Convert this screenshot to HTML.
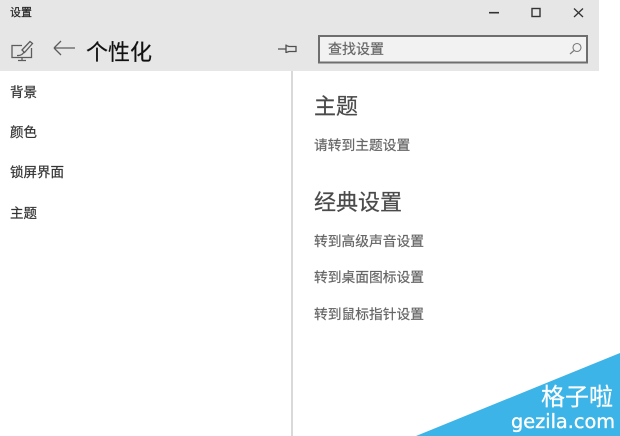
<!DOCTYPE html>
<html>
<head>
<meta charset="utf-8">
<style>
html,body{margin:0;padding:0;}
body{width:620px;height:436px;position:relative;overflow:hidden;background:#fff;font-family:"Liberation Sans","Noto Sans CJK SC",sans-serif;}
.t{position:absolute;white-space:nowrap;line-height:1;-webkit-text-stroke:0.2px currentColor;}
.a{position:absolute;}
</style>
</head>
<body>
<div class="a" style="left:0;top:0;width:599px;height:71px;background:#e6e6e6;"></div>
<div class="a" style="left:291px;top:71px;width:2px;height:365px;background:#d9d9d9;"></div>
<div class="t" style="left:10px;top:8px;font-size:11px;color:#222;">设置</div>

<svg class="a" style="left:0;top:0;" width="620" height="71" fill="none">
<g stroke="#5c5c5c" stroke-width="1.3">
<path d="M22 45.500H12V57.500H31.500V48"/>
<path d="M18 60.500H26M22 57.500V60.500"/>
<path d="M22 50L30 41.500L32.500 43.500L24.500 52.500Z"/>
<path d="M17 55.500Q22 56 24 52"/>
</g>
<path d="M54 48H75M54 48L61 41M54 48L61 55" stroke="#5c5c5c" stroke-width="1.3"/>
<path d="M489 12.700H499" stroke="#333" stroke-width="1.600"/>
<rect x="532" y="8.500" width="8" height="8" stroke="#333" stroke-width="1.400"/>
<path d="M574 8.500L583 17M583 8.500L574 17" stroke="#333" stroke-width="1.300"/>
<path d="M278 49H286M286 44.500V53M286 45.500L289 46.500H296V51.500H289L286 52.500" stroke="#4f4f4f" stroke-width="1.300"/>
<rect x="319" y="36" width="268" height="26.500" fill="#f2f2f2" stroke="#6e6e6e" stroke-width="2"/>
<circle cx="577" cy="47.500" r="4" stroke="#7a7a7a" stroke-width="1.100"/>
<path d="M574 50.500L570 54" stroke="#7a7a7a" stroke-width="1.200"/>
</svg>

<div class="t" style="left:86px;top:42px;font-size:22px;color:#111;">个性化</div>
<div class="t" style="left:328px;top:42px;font-size:14px;color:#666;">查找设置</div>

<div class="t" style="left:10px;top:85.500px;font-size:13.500px;color:#333;">背景</div>
<div class="t" style="left:10px;top:125.500px;font-size:13.500px;color:#333;">颜色</div>
<div class="t" style="left:10px;top:165.500px;font-size:13.500px;color:#333;">锁屏界面</div>
<div class="t" style="left:10px;top:206.500px;font-size:13.500px;color:#333;">主题</div>

<div class="t" style="left:314px;top:96px;font-size:22px;color:#4a4a4a;">主题</div>
<div class="t" style="left:314px;top:138.500px;font-size:13.750px;color:#666;">请转到主题设置</div>
<div class="t" style="left:314px;top:191.500px;font-size:22px;color:#4a4a4a;">经典设置</div>
<div class="t" style="left:314px;top:234.500px;font-size:13.750px;color:#666;">转到高级声音设置</div>
<div class="t" style="left:314px;top:271px;font-size:13.750px;color:#666;">转到桌面图标设置</div>
<div class="t" style="left:314px;top:307.500px;font-size:13.750px;color:#666;">转到鼠标指针设置</div>

<svg class="a" style="left:0;top:0;" width="620" height="436">
<polygon points="620,353 620,436 416,436" fill="#3cb4e7"/>
</svg>
<div class="t" style="left:541px;top:386px;font-size:24px;color:#fff;">格子啦</div>
<div class="t" style="left:511px;top:412px;font-size:19.300px;color:#fff;font-family:'DejaVu Sans',sans-serif;-webkit-text-stroke:0.35px #fff;">gezila.com</div>
</body>
</html>
